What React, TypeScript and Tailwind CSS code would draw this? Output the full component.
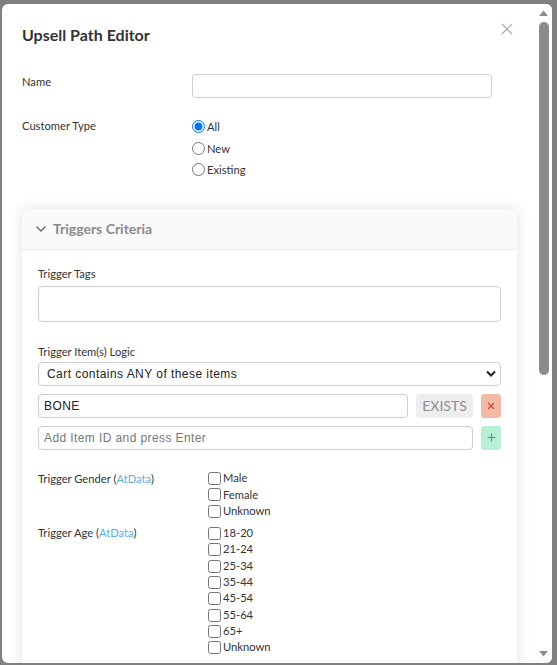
import React from "react";

const lato = { fontFamily: "Lato, 'Open Sans', sans-serif" };
const arial = { fontFamily: "'Liberation Sans', Arial, sans-serif" };

function CheckRow({ label }: { label: string }) {
  return (
    <label className="flex items-center h-[16.3px] text-[11.2px] text-[#333]">
      <input type="checkbox" className="m-0 mr-[2px] w-[13px] h-[13px]" />
      <span>{label}</span>
    </label>
  );
}

function RadioRow({ label, checked }: { label: string; checked?: boolean }) {
  return (
    <label className="flex items-center h-[21.5px] text-[11.2px] text-[#333]">
      <input type="radio" name="ct" defaultChecked={checked} className="m-0 mr-[2px] w-[13px] h-[13px]" />
      <span className="translate-y-[1px]">{label}</span>
    </label>
  );
}

export default function App() {
  return (
    <div className="min-h-screen bg-[#808080] pt-[4px] pl-[2px]" style={lato}>
      <div className="w-[550px] h-[659px] bg-white rounded-md overflow-hidden flex">
        <div className="w-[535px] h-full overflow-hidden px-[20px] pt-[20px] pb-[20px]">
          <div className="flex items-start justify-between">
            <h2 className="text-[16px] leading-[22px] font-bold text-[#333]">Upsell Path Editor</h2>
            <svg width="12" height="12" viewBox="0 0 12 12" className="mt-[-1px] mr-[4px]">
              <path d="M1 1 L11 11 M11 1 L1 11" stroke="#a8a8a8" strokeWidth="1.2" fill="none" />
            </svg>
          </div>

          <div className="flex mt-[28px]">
            <div className="w-[170px] shrink-0 text-[11.2px] leading-[16px] text-[#333]">Name</div>
            <input className="w-[300px] h-[24px] border border-[#ccc] rounded-[4px] outline-none px-2" />
          </div>

          <div className="flex mt-[20px]">
            <div className="w-[170px] shrink-0 text-[11.2px] leading-[16px] text-[#333]">Customer Type</div>
            <div className="flex flex-col -mt-[2px]">
              <RadioRow label="All" checked />
              <RadioRow label="New" />
              <RadioRow label="Existing" />
            </div>
          </div>

          <div className="mt-[28px] rounded-t-md shadow-[0_0_14px_rgba(0,0,0,0.12)] bg-white">
            <div className="h-[41px] bg-[#fafafa] border-b border-[#ececec] rounded-t-md flex items-center pl-[13px]">
              <svg width="12" height="8" viewBox="0 0 12 8" className="mr-[6px]">
                <path d="M1.5 1.5 L6 6 L10.5 1.5" stroke="#666" strokeWidth="1.3" fill="none" />
              </svg>
              <span className="text-[14px] font-bold text-[#8a8a8a]">Triggers Criteria</span>
            </div>
            <div className="px-[16px] pt-[16px] pb-[540px]">
              <div className="text-[11.2px] leading-[16px] text-[#333]">Trigger Tags</div>
              <div className="mt-[4px] h-[36px] border border-[#ccc] rounded-[4px]" />

              <div className="mt-[22px] text-[11.2px] leading-[16px] text-[#333]">Trigger Item(s) Logic</div>
              <div className="mt-[2px] h-[24px] border border-[#ccc] rounded-[4px] flex items-center justify-between pl-[8px] pr-[3px]">
                <span className="text-[12px] tracking-[0.45px] text-[#222]" style={arial}>Cart contains ANY of these items</span>
                <svg width="12" height="8" viewBox="0 0 12 8">
                  <path d="M2 1.5 L6 5.5 L10 1.5" stroke="#222" strokeWidth="2" fill="none" />
                </svg>
              </div>

              <div className="mt-[8px] flex items-center">
                <div className="flex-1 h-[24px] border border-[#ccc] rounded-[4px] flex items-center pl-[5px]">
                  <span className="text-[12px] tracking-[0.4px] text-[#222]" style={arial}>BONE</span>
                </div>
                <div className="ml-[8px] w-[57px] h-[24px] bg-[#eeeeee] rounded-[4px] flex items-center justify-center text-[14px] text-[#8a9099]">EXISTS</div>
                <div className="ml-[8px] w-[20px] h-[24px] bg-[#f5b9a7] rounded-[3px] flex items-center justify-center">
                  <svg width="8" height="8" viewBox="0 0 8 8">
                    <path d="M1 1 L7 7 M7 1 L1 7" stroke="#c9463d" strokeWidth="1.2" fill="none" />
                  </svg>
                </div>
              </div>

              <div className="mt-[8px] flex items-center">
                <div className="flex-1 h-[24px] border border-[#ccc] rounded-[4px] flex items-center pl-[5px]">
                  <span className="text-[12px] tracking-[0.4px] text-[#777]" style={arial}>Add Item ID and press Enter</span>
                </div>
                <div className="ml-[8px] w-[20px] h-[24px] bg-[#b8f0d6] rounded-[3px] flex items-center justify-center">
                  <svg width="9" height="9" viewBox="0 0 9 9">
                    <path d="M4.5 0.5 V8.5 M0.5 4.5 H8.5" stroke="#2bb07a" strokeWidth="1.2" fill="none" />
                  </svg>
                </div>
              </div>

              <div className="flex mt-[21px]">
                <div className="w-[170px] shrink-0 text-[11.2px] leading-[16px] text-[#333]">
                  Trigger Gender (<span className="text-[#5dade2]">AtData</span>)
                </div>
                <div className="flex flex-col">
                  <CheckRow label="Male" />
                  <CheckRow label="Female" />
                  <CheckRow label="Unknown" />
                </div>
              </div>

              <div className="flex mt-[6px]">
                <div className="w-[170px] shrink-0 text-[11.2px] leading-[16px] text-[#333]">
                  Trigger Age (<span className="text-[#5dade2]">AtData</span>)
                </div>
                <div className="flex flex-col">
                  <CheckRow label="18-20" />
                  <CheckRow label="21-24" />
                  <CheckRow label="25-34" />
                  <CheckRow label="35-44" />
                  <CheckRow label="45-54" />
                  <CheckRow label="55-64" />
                  <CheckRow label="65+" />
                  <CheckRow label="Unknown" />
                </div>
              </div>
            </div>
          </div>
        </div>

        <div className="w-[15px] h-full bg-white flex flex-col items-center pt-[6px] pb-[6px] pr-[2px]">
          <svg width="9" height="6" viewBox="0 0 9 6">
            <path d="M0 6 L4.5 0.5 L9 6 Z" fill="#8c8c8c" />
          </svg>
          <div className="mt-[6px] w-[10px] h-[353px] rounded-full bg-[#8c8c8c]" />
          <div className="flex-1" />
          <svg width="9" height="6" viewBox="0 0 9 6">
            <path d="M0 0 L4.5 5.5 L9 0 Z" fill="#8c8c8c" />
          </svg>
        </div>
      </div>
    </div>
  );
}
